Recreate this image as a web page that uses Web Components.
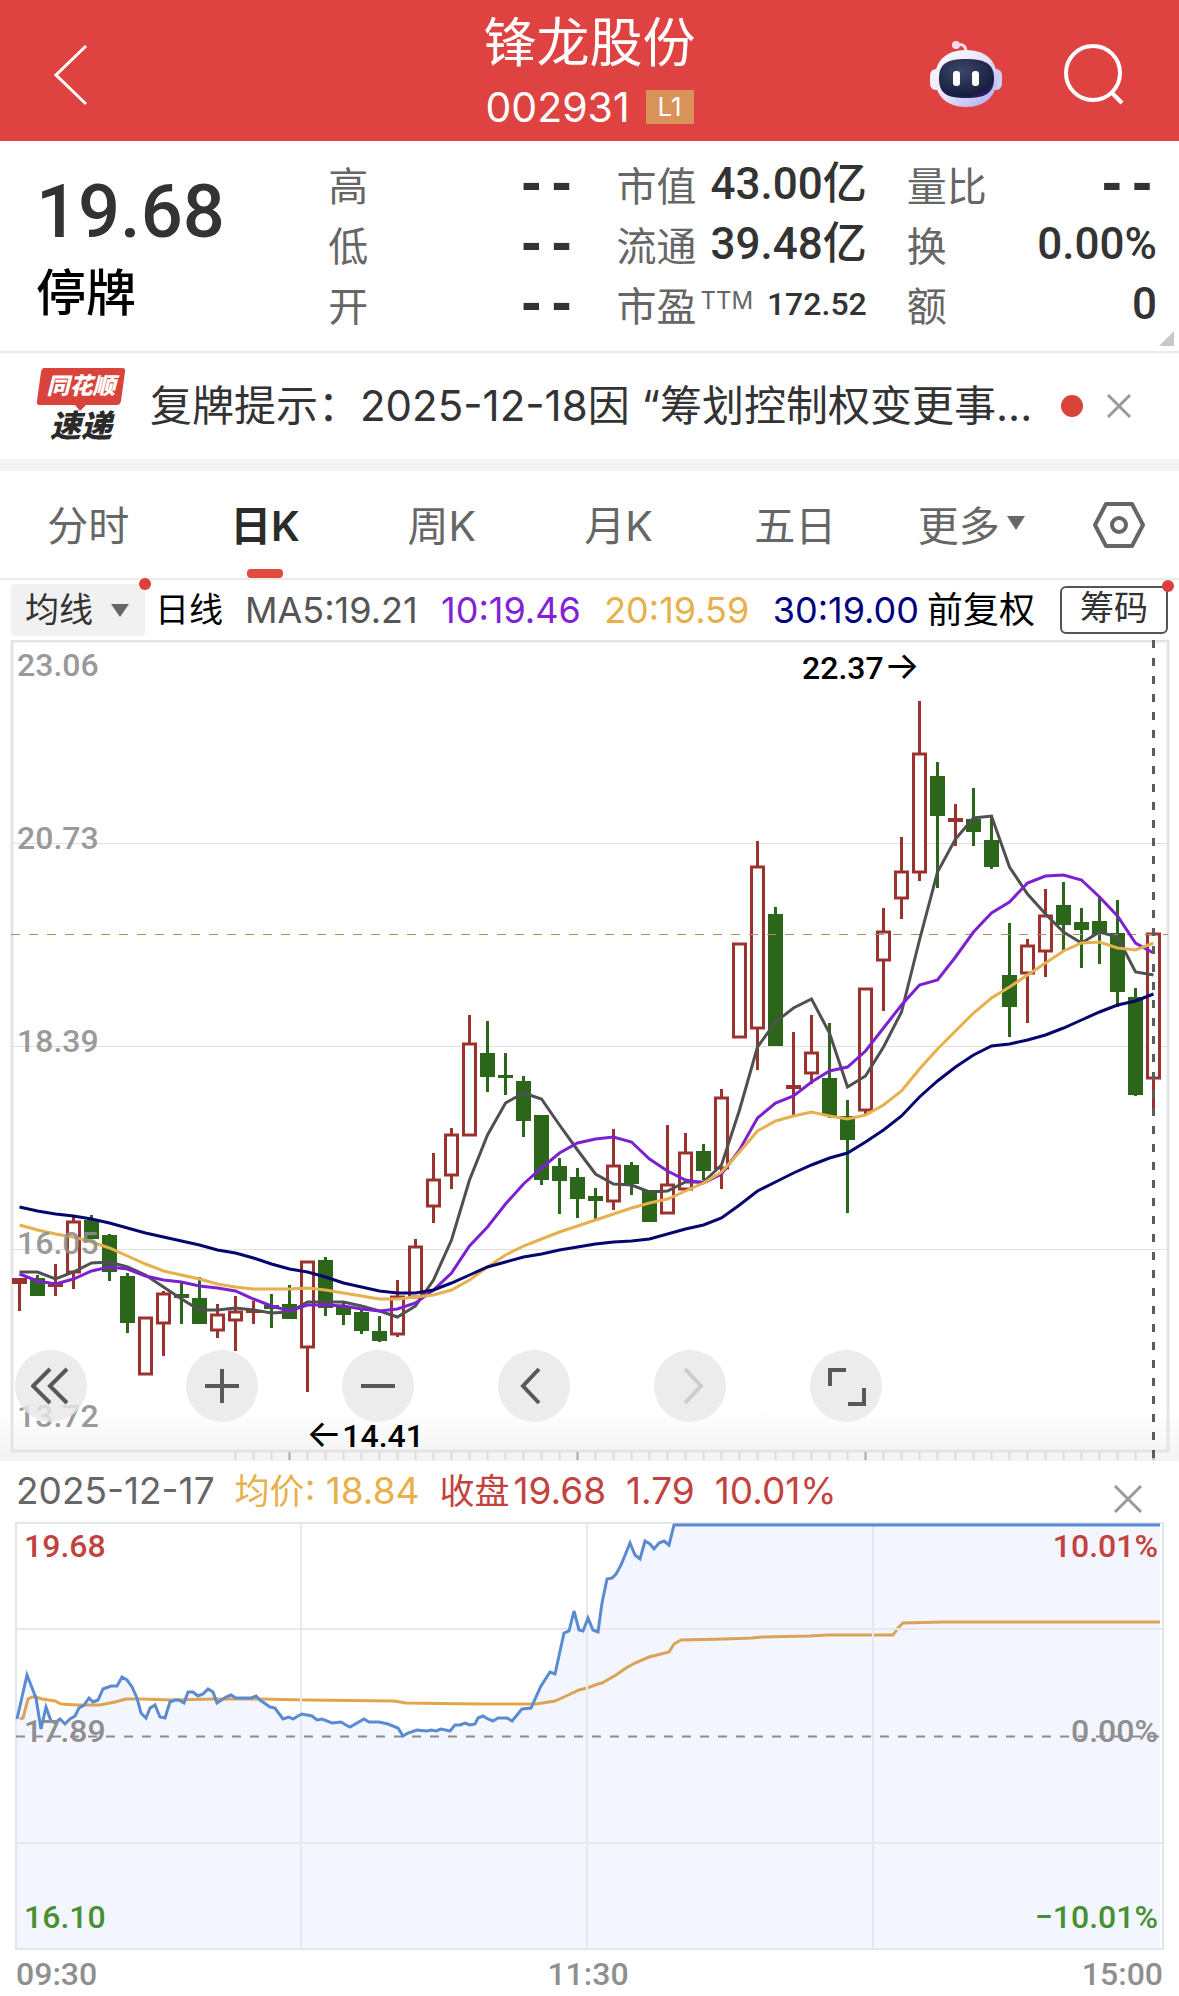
<!DOCTYPE html>
<html lang="zh-CN">
<head>
<meta charset="utf-8">
<meta name="viewport" content="width=device-width, initial-scale=1">
<title>锋龙股份 002931</title>
<style>
  body {
    margin: 0;
    background: #fff;
    color: #333;
    font-family: Inter, "Noto Sans CJK SC", sans-serif;
    --num-font: Roboto, "Noto Sans CJK SC", sans-serif;
    --red: #df4341;
    --grey: #666;
  }
</style>
</head>
<body>
<stock-page></stock-page>

<script>
const BUTTON_RESET = `
  button {
    border: 0;
    padding: 0;
    background: none;
    color: inherit;
    font: inherit;
    cursor: pointer;
  }
  svg { display: block; }
`;

class BaseElement extends HTMLElement {
  constructor() {
    super();
    this.attachShadow({ mode: 'open' });
  }

  connectedCallback() {
    this.shadowRoot.innerHTML = `<style>${BUTTON_RESET}${this.styles()}</style>${this.markup()}`;
  }

  styles() { return ''; }
  markup() { return '<slot></slot>'; }
}

class StockHeader extends BaseElement {
  styles() {
    return `
      :host {
        display: grid;
        grid-template-columns: 1fr auto 1fr;
        align-items: center;
        box-sizing: border-box;
        height: 141px;
        padding-top: 8px;
        background: var(--red);
        color: #fff;
      }
      .back { justify-self: start; margin-left: 44px; }
      .center { text-align: center; }
      h1 { margin: 0; font-size: 53px; line-height: 64px; font-weight: 400; }
      .code { display: flex; align-items: center; justify-content: center; gap: 16px; font-size: 41px; line-height: 64px; }
      .level { width: 48px; background: #d9925a; font-size: 26px; line-height: 34px; }
      .actions { display: flex; justify-content: flex-end; gap: 60px; margin-right: 51px; }
    `;
  }

  markup() {
    return `
      <button class="back" aria-label="返回">
        <svg width="54" height="64" viewBox="0 0 54 64" fill="none" stroke="#fff" stroke-width="3">
          <path d="M42 3 12 32 42 61"/>
        </svg>
      </button>
      <div class="center">
        <h1>${this.getAttribute('name')}</h1>
        <div class="code"><span>${this.getAttribute('code')}</span><span class="level">L1</span></div>
      </div>
      <div class="actions">
        <button aria-label="智能助手">
          <svg width="72" height="68" viewBox="0 0 72 68">
            <defs>
              <linearGradient id="shell" x1="0" y1="0" x2="1" y2="1">
                <stop offset="0" stop-color="#fff"/><stop offset=".5" stop-color="#e6e2fa"/><stop offset="1" stop-color="#a9a6ee"/>
              </linearGradient>
              <radialGradient id="face" cx=".4" cy=".3" r=".8">
                <stop offset="0" stop-color="#3d4768"/><stop offset=".8" stop-color="#171e40"/><stop offset="1" stop-color="#3a1f85"/>
              </radialGradient>
            </defs>
            <path d="M26 4c7-2 10 1 10 8" fill="none" stroke="#fbdcea" stroke-width="3"/>
            <circle cx="26" cy="4" r="4" fill="#f9d9ec"/>
            <rect x="0" y="28" width="13" height="21" rx="6" fill="#f6eefa"/>
            <rect x="59" y="28" width="13" height="21" rx="6" fill="#cfcdf8"/>
            <path d="M36 9c20 0 31 11 31 28S56 66 36 66 5 54 5 37 16 9 36 9z" fill="url(#shell)"/>
            <path d="M36 18c19 0 28 5 28 19 0 15-8 20-28 20S9 52 9 37c0-14 8-19 27-19z" fill="url(#face)"/>
            <rect x="23" y="30" width="7" height="15" rx="3" fill="#fff"/>
            <rect x="42" y="30" width="7" height="15" rx="3" fill="#fff"/>
          </svg>
        </button>
        <button aria-label="搜索">
          <svg width="66" height="66" viewBox="0 0 66 66" fill="none" stroke="#fff" stroke-width="4">
            <circle cx="31" cy="31" r="27"/>
            <path d="M49 50 60 61"/>
          </svg>
        </button>
      </div>
    `;
  }
}

class QuoteItem extends BaseElement {
  styles() {
    return `
      :host { display: flex; justify-content: space-between; align-items: center; height: 60px; white-space: nowrap; }
      .label { color: var(--grey); font-size: 40px; }
      sup { font-size: 24px; line-height: 24px; vertical-align: 12px; margin-left: 4px; }
      .value { font-family: var(--num-font); font-size: 44px; font-weight: 500; line-height: 62px; }
      .value.small { font-size: 32px; }
      .value.empty { font: bold 50px/50px "DejaVu Sans Mono", monospace; }
    `;
  }

  markup() {
    const value = this.getAttribute('value');
    const note = this.getAttribute('note');
    const cls = value === '--' ? 'empty' : note ? 'small' : '';
    return `
      <span class="label">${this.getAttribute('label')}${note ? `<sup>${note}</sup>` : ''}</span>
      <span class="value ${cls}">${value}</span>
    `;
  }
}

class QuotePanel extends BaseElement {
  styles() {
    return `
      :host {
        position: relative;
        display: grid;
        grid-template-columns: 252fr 248fr 250fr 250fr;
        gap: 40px;
        box-sizing: border-box;
        height: 212px;
        padding: 13px 22px 0 36px;
        border-bottom: 2px solid #ebebeb;
      }
      .price { font: 500 74px/84px var(--num-font); margin-top: 16px; }
      .status { color: #000; font-size: 50px; line-height: 78px; font-weight: 500; }
      .expand { position: absolute; right: 5px; bottom: 5px; }
    `;
  }

  markup() {
    return `
      <div>
        <div class="price">19.68</div>
        <div class="status">停牌</div>
      </div>
      <div>
        <quote-item label="高" value="--"></quote-item>
        <quote-item label="低" value="--"></quote-item>
        <quote-item label="开" value="--"></quote-item>
      </div>
      <div>
        <quote-item label="市值" value="43.00亿"></quote-item>
        <quote-item label="流通" value="39.48亿"></quote-item>
        <quote-item label="市盈" note="TTM" value="172.52"></quote-item>
      </div>
      <div>
        <quote-item label="量比" value="--"></quote-item>
        <quote-item label="换" value="0.00%"></quote-item>
        <quote-item label="额" value="0"></quote-item>
      </div>
      <svg class="expand" width="15" height="15"><path d="M15 0V15H0z" fill="#c8c8c8"/></svg>
    `;
  }
}

class NewsBar extends BaseElement {
  styles() {
    return `
      :host {
        display: flex;
        align-items: center;
        height: 106px;
        padding: 0 46px 0 36px;
        border-bottom: 12px solid #f4f4f4;
      }
      .logo { width: 90px; margin-right: 24px; font-style: italic; font-weight: 900; text-align: center; }
      .brand {
        position: relative;
        height: 36px;
        color: #fff;
        font-size: 23px;
        line-height: 36px;
      }
      .brand svg { position: absolute; inset: 0; z-index: -1; }
      .sub { font-size: 31px; line-height: 36px; margin-top: 4px; color: #2b2b2b; }
      a {
        flex: 1;
        min-width: 0;
        color: #333;
        font-size: 42px;
        line-height: 60px;
        text-decoration: none;
        white-space: nowrap;
      }
      .dot { width: 22px; height: 22px; border-radius: 50%; background: #d8433b; margin-right: 22px; }
    `;
  }

  markup() {
    return `
      <div class="logo">
        <div class="brand">
          <svg width="90" height="44" viewBox="0 0 90 44">
            <path d="M8 0H86q4 0 3 4L85 33q-1 4-4 4H50l-6 6-5-6H4q-4 0-3-4L5 4q1-4 3-4z" fill="#d8433b"/>
          </svg>
          同花顺
        </div>
        <div class="sub">速递</div>
      </div>
      <a href="#news"><slot></slot></a>
      <span class="dot"></span>
      <button aria-label="关闭">
        <svg width="28" height="28" viewBox="0 0 28 28" stroke="#999" stroke-width="3"><path d="M3 3 25 25M25 3 3 25"/></svg>
      </button>
    `;
  }
}

class PeriodTabs extends BaseElement {
  styles() {
    return `
      :host {
        display: grid;
        grid-template-columns: repeat(6, 177fr) 117fr;
        box-sizing: border-box;
        height: 109px;
        padding-right: 2px;
        border-bottom: 2px solid #ebebeb;
        color: var(--grey);
        font-size: 41px;
      }
      button { position: relative; display: flex; align-items: center; justify-content: center; gap: 6px; padding-bottom: 4px; }
      button:last-child { padding-bottom: 0; }
      button[aria-selected="true"] { color: #2b2b2b; font-weight: 600; }
      button[aria-selected="true"]::after {
        content: '';
        position: absolute;
        left: calc(50% - 18px);
        bottom: 0;
        width: 36px;
        height: 9px;
        border-radius: 4px;
        background: #e04a3f;
      }
    `;
  }

  markup() {
    const tabs = ['分时', '日K', '周K', '月K', '五日'];
    return `
      ${tabs.map(t => `<button role="tab" aria-selected="${t === '日K'}">${t}</button>`).join('')}
      <button aria-haspopup="menu">更多<svg width="20" height="14"><path d="M1 0H19L10 14z" fill="#666"/></svg></button>
      <button aria-label="设置">
        <svg width="54" height="50" viewBox="0 0 54 50" fill="none" stroke="#666" stroke-width="4" stroke-linejoin="round">
          <path d="M14 4H40L51 25 40 46H14L3 25z"/>
          <circle cx="27" cy="25" r="7"/>
        </svg>
      </button>
    `;
  }
}

class IndicatorBar extends BaseElement {
  styles() {
    return `
      :host {
        display: flex;
        align-items: center;
        box-sizing: border-box;
        height: 60px;
        padding: 0 11px;
        color: #000;
        font-size: 34px;
        line-height: 40px;
        white-space: nowrap;
      }
      .pick, .chip { position: relative; }
      .pick::after, .chip::after {
        content: '';
        position: absolute;
        width: 12px;
        height: 12px;
        top: -6px;
        right: -6px;
        border-radius: 50%;
        background: #de3f3c;
      }
      select {
        appearance: none;
        width: 134px;
        height: 52px;
        padding: 0 0 0 14px;
        border: 0;
        border-radius: 4px;
        background: #f1f1f1;
        color: #333;
        font: inherit;
      }
      .pick svg { position: absolute; right: 15px; top: 20px; }
      .day { margin: 0 22px 0 10px; }
      .ma { display: flex; flex: 1; justify-content: space-between; font-size: 36px; }
      .adj { margin: 0 25px 0 8px; font-size: 36px; }
      .chip {
        box-sizing: border-box;
        width: 108px;
        height: 48px;
        padding-bottom: 4px;
        border: 2px solid #555;
        border-radius: 6px;
        color: #333;
      }
      .chip::after { right: -8px; top: -8px; }
    `;
  }

  markup() {
    return `
      <div class="pick">
        <select aria-label="指标"><option>均线</option></select>
        <svg width="20" height="13"><path d="M1 0H19L10 13z" fill="#666"/></svg>
      </div>
      <span class="day">日线</span>
      <div class="ma">
        <span style="color:#555">MA5:19.21</span>
        <span style="color:#8321d6">10:19.46</span>
        <span style="color:#e8b04a">20:19.59</span>
        <span style="color:#000080">30:19.00</span>
      </div>
      <span class="adj">前复权</span>
      <button class="chip">筹码</button>
    `;
  }
}

// [direction, high, body top, body bottom, low]
const CANDLES = [
  ['r',1278,1278,1284,1311],['g',1275,1278,1296,1296],['r',1264,1282,1287,1296],['r',1217,1221,1273,1289],
  ['g',1215,1220,1239,1239],['g',1234,1235,1272,1281],['g',1273,1276,1323,1333],['r',1317,1317,1375,1375],
  ['r',1291,1293,1324,1356],['g',1283,1294,1298,1324],['g',1277,1298,1324,1324],['r',1304,1314,1331,1338],
  ['r',1296,1311,1321,1351],['r',1301,1310,1313,1324],['g',1294,1305,1309,1328],['g',1285,1304,1319,1319],
  ['r',1261,1261,1348,1392],['g',1257,1260,1308,1316],['g',1303,1307,1315,1325],['g',1308,1312,1331,1334],
  ['g',1316,1331,1341,1342],['r',1280,1296,1335,1337],['r',1239,1246,1298,1298],['r',1153,1179,1207,1223],
  ['r',1128,1134,1176,1189],['r',1015,1043,1136,1136],['g',1021,1053,1077,1092],['g',1053,1075,1078,1095],
  ['g',1076,1081,1121,1137],['g',1115,1115,1180,1185],['g',1158,1166,1181,1214],['g',1168,1177,1199,1218],
  ['g',1188,1196,1201,1219],['r',1129,1165,1202,1210],['g',1162,1165,1184,1195],['g',1190,1190,1222,1222],
  ['r',1125,1184,1214,1214],['r',1133,1152,1190,1190],['g',1144,1151,1171,1180],['r',1089,1097,1169,1189],
  ['r',943,943,1038,1038],['r',841,866,1029,1070],['g',907,914,1046,1046],['r',1032,1085,1089,1115],
  ['r',1015,1052,1074,1084],['g',1023,1078,1116,1118],['g',1100,1116,1140,1213],['r',988,988,1111,1116],
  ['r',908,931,961,1011],['r',837,871,899,919],['r',701,753,873,881],['g',762,776,816,888],
  ['r',804,818,822,846],['g',788,819,832,846],['g',817,840,867,869],['g',923,975,1007,1037],
  ['r',939,945,974,1023],['r',889,915,952,977],['g',882,905,925,950],['g',908,922,930,968],
  ['g',896,921,934,964],['g',900,933,992,1007],['g',988,997,1095,1096],['r',933,933,1079,1108]
];

const AVERAGES = [
  { color: '#505050', y: [1272,1272,1279,1272,1263,1262,1267,1275,1287,1299,1310,1310,1308,1310,1313,1312,1302,1302,1302,1306,1311,1317,1306,1280,1240,1180,1135,1103,1093,1099,1125,1150,1174,1184,1185,1192,1191,1182,1182,1165,1110,1047,1022,1008,999,1033,1087,1076,1047,1012,940,872,839,818,816,867,894,914,932,943,932,937,972,975] },
  { color: '#7d20d0', y: [1274,1281,1284,1279,1271,1267,1269,1276,1280,1282,1286,1288,1291,1299,1306,1311,1305,1305,1306,1309,1311,1309,1303,1290,1273,1246,1227,1204,1184,1168,1153,1143,1139,1137,1142,1159,1171,1180,1183,1174,1150,1118,1103,1096,1082,1071,1067,1051,1028,1005,985,980,957,932,913,902,883,876,875,880,897,916,943,953] },
  { color: '#e6b04e', y: [1225,1230,1234,1237,1242,1248,1256,1264,1271,1275,1279,1284,1287,1289,1289,1289,1288,1290,1293,1296,1299,1299,1297,1295,1290,1280,1267,1255,1246,1239,1232,1226,1220,1214,1208,1203,1199,1191,1183,1172,1152,1131,1121,1116,1112,1116,1119,1115,1105,1091,1069,1049,1031,1013,998,987,975,963,951,943,942,948,950,943] },
  { color: '#06066e', y: [1207,1211,1214,1216,1219,1223,1228,1233,1237,1241,1245,1250,1253,1258,1264,1269,1272,1277,1283,1287,1291,1293,1293,1290,1283,1275,1267,1262,1257,1254,1250,1247,1244,1242,1241,1239,1234,1229,1225,1218,1205,1191,1182,1173,1165,1158,1153,1142,1130,1116,1097,1081,1067,1055,1046,1044,1040,1035,1028,1020,1012,1005,1001,994] }
];

const STEP = 18;
const candleX = i => 19.5 + i * STEP;

class KlineChart extends BaseElement {
  styles() {
    return `
      :host { display: block; position: relative; }
      svg.plot { width: 100%; height: auto; }
      text { font: 500 32px var(--num-font); }
      .arrow { font: 400 38px Inter, sans-serif; }
      nav { position: absolute; left: 15px; bottom: 40px; display: flex; gap: 84px; }
      nav button {
        display: grid;
        place-items: center;
        width: 72px;
        height: 72px;
        border-radius: 50%;
        background: rgba(232, 232, 232, .82);
      }
      nav button:first-child { margin-right: 15px; }
    `;
  }

  candle([dir, high, top, bottom, low], i) {
    const x = candleX(i);
    const color = dir === 'r' ? '#9c322d' : '#2b661a';
    const wick = `<path d="M${x} ${high}V${top}M${x} ${bottom}V${low}" stroke="${color}" stroke-width="3"/>`;
    if (dir === 'g' || bottom - top < 7) {
      return wick + `<rect x="${x - 7.5}" y="${top}" width="15" height="${bottom - top}" fill="${color}"/>`;
    }
    return wick + `<rect x="${x - 6}" y="${top + 1}" width="12" height="${bottom - top - 2}" fill="#fff" stroke="${color}" stroke-width="3"/>`;
  }

  ticks() {
    let out = '';
    for (let i = 12; i < 64; i++) {
      out += `<path d="M${candleX(i)} 1452v8" stroke="${(i + 1) % 16 === 0 ? '#aaa' : '#ddd'}" stroke-width="2"/>`;
    }
    return out;
  }

  button(label, path, extra = '') {
    const color = extra ? '#ccc' : '#595959';
    return `<button aria-label="${label}" ${extra}>
      <svg width="40" height="40" viewBox="0 0 40 40" fill="none" stroke="${color}" stroke-width="4"><path d="${path}"/></svg>
    </button>`;
  }

  markup() {
    const labels = [['23.06', 676], ['20.73', 849], ['18.39', 1052], ['16.05', 1254], ['13.72', 1427]];
    return `
      <svg class="plot" viewBox="0 640 1179 822">
        <defs>
          <linearGradient id="fade" x1="0" y1="0" x2="0" y2="1">
            <stop offset="0" stop-color="#fff"/><stop offset="1" stop-color="#f3f3f3"/>
          </linearGradient>
        </defs>
        <rect x="0" y="1410" width="1179" height="51" fill="url(#fade)"/>
        <rect x="12" y="641" width="1156" height="810" fill="none" stroke="#e4e4e4" stroke-width="3"/>
        <path d="M12 843.5H1168M12 1046.5H1168M12 1249.5H1168" stroke="#e0e0e0"/>
        ${this.ticks()}
        ${CANDLES.map((c, i) => this.candle(c, i)).join('')}
        <path d="M11 934.5H1168" stroke="#a8935a" stroke-dasharray="9 9"/>
        ${AVERAGES.map(({ color, y }) =>
          `<polyline points="${y.map((v, i) => `${candleX(i)},${v}`).join(' ')}" fill="none" stroke="${color}" stroke-width="3"/>`
        ).join('')}
        <path d="M1153.5 640V1460" stroke="#5c5c5c" stroke-width="3" stroke-dasharray="8 10"/>
        ${labels.map(([t, y]) => `<text x="17" y="${y}" fill="#8c8c8c" fill-opacity=".9">${t}</text>`).join('')}
        <text x="802" y="679">22.37<tspan class="arrow">→</tspan></text>
        <text x="306" y="1447"><tspan class="arrow">←</tspan>14.41</text>
      </svg>
      <nav>
        ${this.button('最早', 'M19 3 2 20 19 37M36 3 19 20 36 37')}
        ${this.button('放大', 'M3 20H37M20 3V37')}
        ${this.button('缩小', 'M3 20H37')}
        ${this.button('向左', 'M25 3 9 20 25 37')}
        ${this.button('向右', 'M15 3 31 20 15 37', 'disabled')}
        ${this.button('全屏', 'M4 20V4H20M38 22V38H22')}
      </nav>
    `;
  }
}

const PRICE_LINE = '17,1719 27,1675 36,1698 41,1729 46,1707 51,1721 55,1723 60,1719 65,1724 70,1719 75,1716 79,1708 84,1705 89,1698 93,1702 98,1700 103,1689 111,1686 117,1686 122,1677 127,1680 132,1687 137,1698 141,1713 146,1718 150,1708 155,1705 160,1717 165,1718 170,1702 175,1700 179,1700 184,1703 188,1692 193,1692 198,1696 203,1694 208,1689 213,1692 217,1703 226,1697 231,1695 236,1698 251,1698 256,1696 260,1700 270,1707 275,1708 283,1719 289,1717 293,1719 298,1716 302,1714 312,1716 317,1720 322,1719 332,1723 341,1722 346,1725 350,1727 364,1719 369,1722 379,1722 388,1724 398,1728 403,1736 408,1733 417,1730 427,1731 431,1730 436,1731 441,1729 450,1731 455,1725 460,1725 465,1723 470,1725 475,1724 478,1718 483,1716 488,1719 493,1721 498,1718 507,1718 512,1721 517,1715 522,1709 531,1708 541,1686 550,1672 555,1674 564,1633 569,1631 574,1611 579,1630 583,1631 588,1618 593,1630 598,1632 602,1603 607,1579 612,1578 616,1574 621,1565 630,1543 635,1555 640,1559 645,1541 650,1544 654,1549 659,1543 664,1541 669,1545 674,1525 1160,1525';
const AVG_LINE = '20,1719 23,1718 28,1699 32,1697 36,1697 42,1699 55,1701 61,1704 77,1705 100,1705 115,1702 126,1699 142,1699 172,1700 214,1699 260,1699 306,1700 394,1701 406,1703 478,1704 536,1704 555,1701 564,1697 579,1690 587,1688 598,1684 602,1683 616,1675 626,1668 635,1663 649,1657 669,1652 674,1644 681,1640 725,1639 752,1638 761,1637 809,1636 828,1635 893,1635 898,1628 903,1623 943,1622 1160,1622';

class DayChart extends BaseElement {
  styles() {
    return `
      :host { display: block; }
      header {
        display: flex;
        align-items: center;
        gap: 20px;
        height: 58px;
        padding: 0 36px 0 16px;
        font-size: 37px;
        line-height: 60px;
        white-space: nowrap;
      }
      time { color: var(--grey); }
      .avg { color: #e8b04a; }
      .cjk { font-size: 35px; }
      .up { color: #c2423d; }
      .close { display: flex; align-items: baseline; gap: 4px; }
      header button { margin: 16px 0 0 auto; }
      svg.plot { width: 100%; height: auto; }
      text { font: 500 32px var(--num-font); }
    `;
  }

  markup() {
    return `
      <header>
        <time>2025-12-17</time>
        <span class="avg"><span class="cjk">均价</span>: 18.84</span>
        <span class="up close"><span class="cjk">收盘</span><span>19.68</span></span>
        <span class="up">1.79</span>
        <span class="up">10.01%</span>
        <button aria-label="关闭">
          <svg width="30" height="30" viewBox="0 0 30 30" stroke="#999" stroke-width="3"><path d="M2 2 28 28M28 2 2 28"/></svg>
        </button>
      </header>
      <svg class="plot" viewBox="0 1520 1179 476">
        <polyline points="${AVG_LINE}" fill="none" stroke="#e3a54a" stroke-width="3"/>
        <polygon points="16,1948 ${PRICE_LINE} 1160,1948" fill="#6f92ff" fill-opacity=".08"/>
        <rect x="16" y="1523" width="1147" height="426" fill="none" stroke="#e2e5ea" stroke-width="2"/>
        <path d="M16 1629H1163M16 1843H1163M301 1523V1949M587 1523V1949M873 1523V1949" stroke="#e5e8ee" stroke-width="2"/>
        <path d="M16 1736.5H1160" stroke="#8c8c8c" stroke-width="2" stroke-dasharray="9 9"/>
        <polyline points="${PRICE_LINE}" fill="none" stroke="#5a8bd2" stroke-width="3"/>
        <g fill="#c2423d">
          <text x="24" y="1557">19.68</text>
          <text x="1158" y="1557" text-anchor="end">10.01%</text>
        </g>
        <g fill="#8f8f8f">
          <text x="24" y="1742">17.89</text>
          <text x="1158" y="1742" text-anchor="end">0.00%</text>
          <text x="16" y="1985">09:30</text>
          <text x="588" y="1985" text-anchor="middle">11:30</text>
          <text x="1163" y="1985" text-anchor="end">15:00</text>
        </g>
        <g fill="#469033">
          <text x="24" y="1928">16.10</text>
          <text x="1158" y="1928" text-anchor="end">−10.01%</text>
        </g>
      </svg>
    `;
  }
}

class StockPage extends BaseElement {
  styles() {
    return ':host { display: block; isolation: isolate; }';
  }

  markup() {
    return `
      <stock-header name="锋龙股份" code="002931"></stock-header>
      <quote-panel></quote-panel>
      <news-bar>复牌提示：2025-12-18因 “筹划控制权变更事...</news-bar>
      <period-tabs></period-tabs>
      <indicator-bar></indicator-bar>
      <kline-chart></kline-chart>
      <day-chart></day-chart>
    `;
  }
}

customElements.define('stock-header', StockHeader);
customElements.define('quote-item', QuoteItem);
customElements.define('quote-panel', QuotePanel);
customElements.define('news-bar', NewsBar);
customElements.define('period-tabs', PeriodTabs);
customElements.define('indicator-bar', IndicatorBar);
customElements.define('kline-chart', KlineChart);
customElements.define('day-chart', DayChart);
customElements.define('stock-page', StockPage);
</script>
</body>
</html>
